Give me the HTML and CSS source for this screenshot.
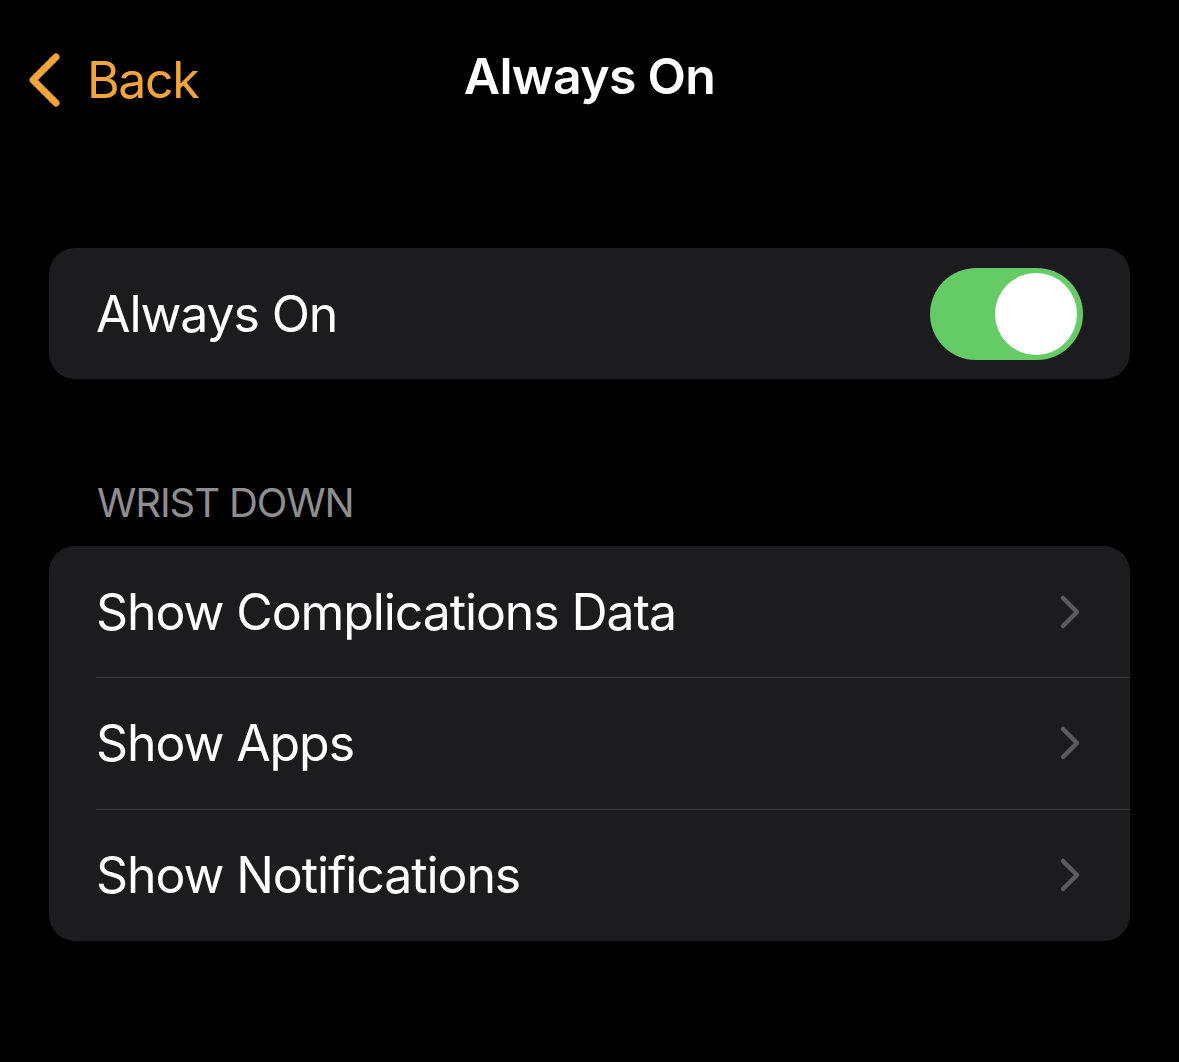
FILE: index.html
```html
<!DOCTYPE html>
<html lang="en">
<head>
  <meta charset="UTF-8" />
  <title>Always On</title>
  <meta name="viewport" content="width=device-width, initial-scale=1" />
  <link rel="stylesheet" href="styles.css">
</head>
<body>

<div class="screen">
  <header class="nav-bar">
    <a class="back-btn" href="#">
      <svg class="back-chevron" viewBox="0 0 34 56" width="34" height="56">
        <path d="M29 5 L6 28 L29 51" fill="none" stroke="currentColor" stroke-width="7" stroke-linecap="round" stroke-linejoin="round" />
      </svg>
      <span>Back</span>
    </a>
    <h1 class="nav-title">Always On</h1>
  </header>

  <section class="group group-top">
    <div class="row">
      <span class="row-label">Always On</span>
      <label class="switch">
        <input type="checkbox" checked />
        <span class="switch-knob"></span>
      </label>
    </div>
  </section>

  <div class="section-header">WRIST DOWN</div>

  <section class="group">
    <a class="row row-link" href="#">
      <span class="row-label">Show Complications Data</span>
      <svg class="chevron" viewBox="0 0 22 36" width="22" height="36">
        <path d="M4 4 L18 18 L4 32" fill="none" stroke="currentColor" stroke-width="4.5" stroke-linecap="round" stroke-linejoin="round" />
      </svg>
    </a>
    <a class="row row-link" href="#">
      <span class="row-label">Show Apps</span>
      <svg class="chevron" viewBox="0 0 22 36" width="22" height="36">
        <path d="M4 4 L18 18 L4 32" fill="none" stroke="currentColor" stroke-width="4.5" stroke-linecap="round" stroke-linejoin="round" />
      </svg>
    </a>
    <a class="row row-link" href="#">
      <span class="row-label">Show Notifications</span>
      <svg class="chevron" viewBox="0 0 22 36" width="22" height="36">
        <path d="M4 4 L18 18 L4 32" fill="none" stroke="currentColor" stroke-width="4.5" stroke-linecap="round" stroke-linejoin="round" />
      </svg>
    </a>
  </section>
</div>

</body>
</html>
```

FILE: styles.css
```css
body {
  margin: 0;
  background: #000;
  color: #fff;
  font-family: Inter, 'Noto Sans', sans-serif;
}
.screen {
  width: 1179px;
  height: 1062px;
  padding: 0 49px;
  box-sizing: border-box;
}
.nav-bar {
  position: relative;
  height: 156px;
  display: flex;
  justify-content: center;
  margin: 0 -49px;
}
.back-btn {
  position: absolute;
  left: 27px;
  top: 50px;
  display: flex;
  align-items: center;
  gap: 26px;
  color: #f2a33a;
  text-decoration: none;
  font-size: 50px;
  letter-spacing: -1.4px;
}
.back-chevron {
  display: block;
}
.nav-title {
  margin: 46px 0 0;
  font-size: 50px;
  font-weight: 600;
  letter-spacing: -0.7px;
}
.group {
  background: #1c1c1e;
  border-radius: 26px;
  overflow: hidden;
}
.group-top {
  margin-top: 92px;
}
.row {
  position: relative;
  height: 131px;
  display: flex;
  align-items: center;
  justify-content: space-between;
  padding: 0 47px 0 47px;
  box-sizing: border-box;
  color: #fff;
  text-decoration: none;
}
.row-link {
  height: 132px;
}
.row-link:first-child {
  height: 131px;
}
.row-label {
  font-size: 50px;
  letter-spacing: -1.1px;
}
/* hairline between rows, inset to the text */
.row-link + .row-link::before {
  content: '';
  position: absolute;
  top: 0;
  left: 47px;
  right: 0;
  height: 1px;
  background: #3d3d40;
}
.chevron {
  color: #5b5b5f;
  margin-right: 2px;
}
.section-header {
  margin: 100px 0 19px;
  padding-left: 48px;
  font-size: 40px;
  line-height: 48px;
  color: #8e8e91;
  letter-spacing: -1.1px;
}
.switch {
  position: relative;
  width: 153px;
  height: 92px;
  display: block;
}
.switch input {
  display: none;
}
.switch-knob {
  position: absolute;
  inset: 0;
  background: #65cb67;
  border-radius: 46px;
}
.switch-knob::after {
  content: '';
  position: absolute;
  top: 5px;
  right: 6px;
  width: 82px;
  height: 82px;
  border-radius: 50%;
  background: #fff;
}
```
